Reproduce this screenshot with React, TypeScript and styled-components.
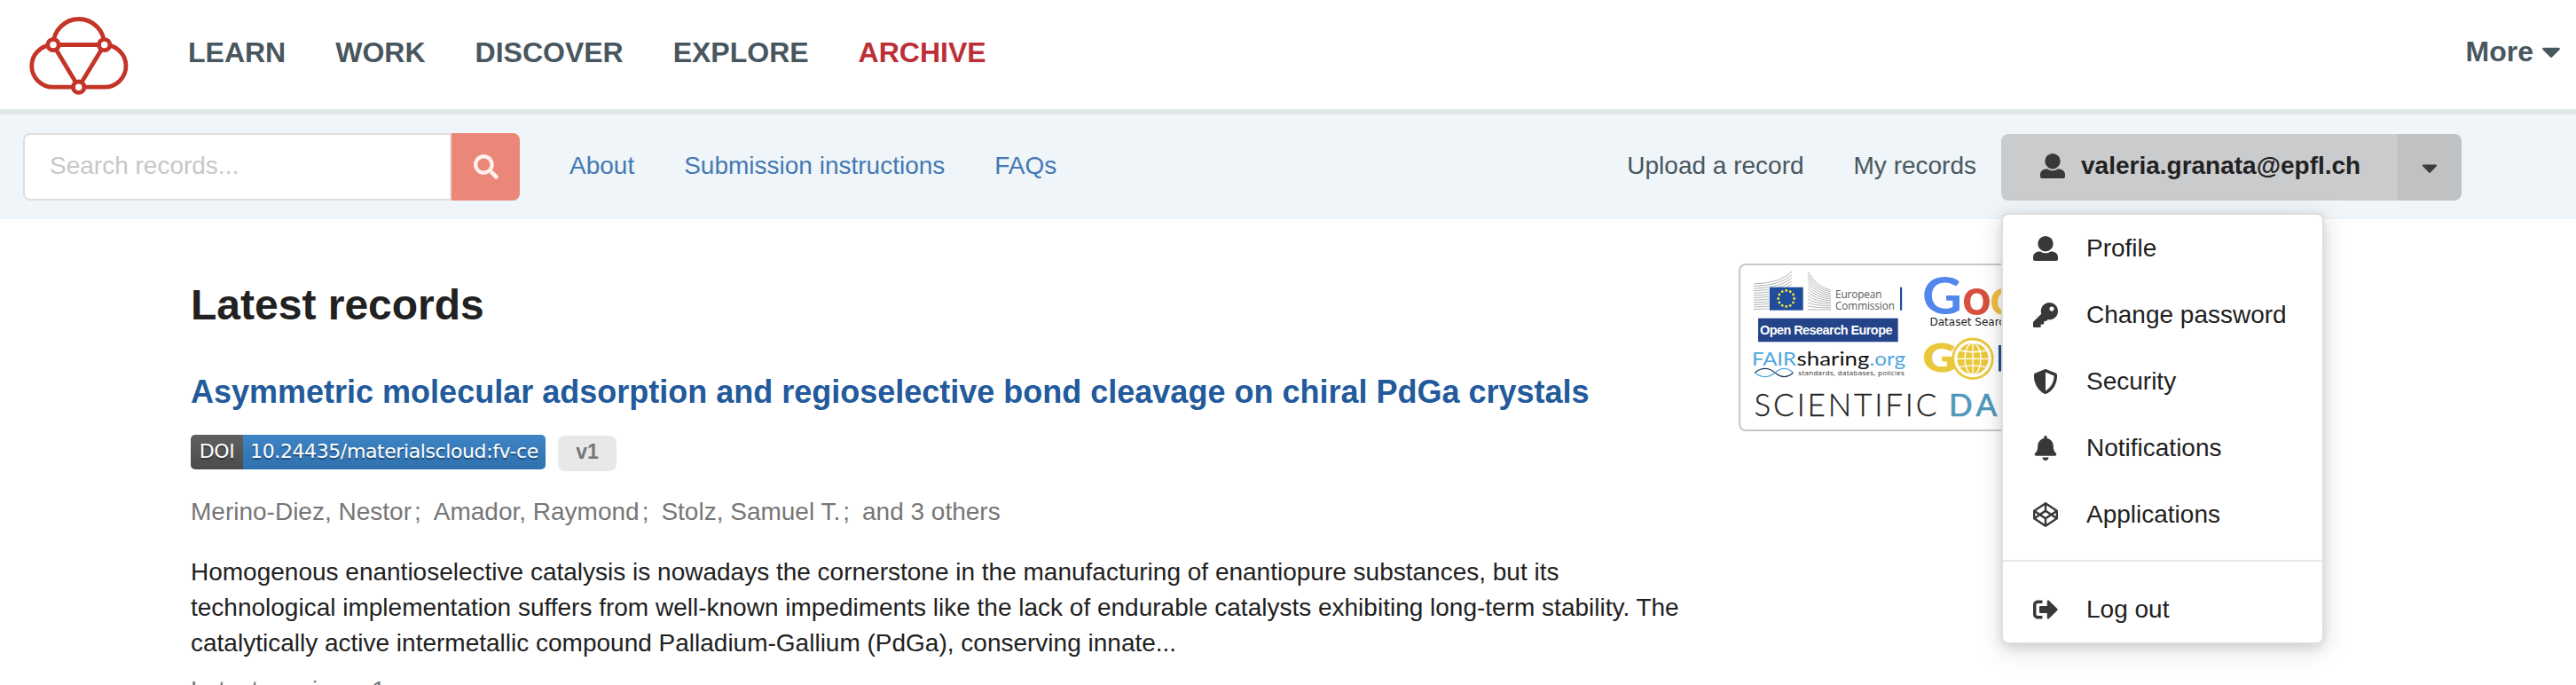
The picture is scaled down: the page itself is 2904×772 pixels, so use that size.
import React from "react";
import styled, { createGlobalStyle } from "styled-components";
import {
  FaSearch,
  FaCaretDown,
  FaKey,
  FaBell,
  FaCodepen,
  FaSignOutAlt,
  FaShieldAlt,
} from "react-icons/fa";

const GlobalStyle = createGlobalStyle`
  body {
    margin: 0;
    height: 772px;
    overflow: hidden;
    background: #fff;
    color: #212121;
    font-family: "Liberation Sans", Arial, sans-serif;
    font-size: 28px;
  }
`;

const Header = styled.header`
  box-sizing: border-box;
  height: 129px;
  padding: 0 11px 6px 32px;
  display: flex;
  align-items: center;
  border-bottom: 6px solid #dfe6e5;
`;

const LogoImage = styled.svg`
  margin-top: 9px;
`;

const Nav = styled.nav`
  display: flex;
  flex: 1;
  gap: 56px;
  margin-left: 66px;
`;

const NavLink = styled.a<{ $active?: boolean }>`
  font-size: 32px;
  font-weight: 700;
  line-height: 40px;
  color: ${(p) => (p.$active ? "#bc2f36" : "#48575e")};
`;

const More = styled(NavLink)`
  display: flex;
  align-items: center;
  gap: 3px;
  padding-bottom: 2px;
`;

const SearchBar = styled.div`
  box-sizing: border-box;
  height: 118px;
  padding: 0 129px 0 26px;
  display: flex;
  align-items: center;
  background: #eff5f8;
`;

const SearchBox = styled.form`
  display: flex;
  width: 560px;
  height: 76px;
`;

const SearchInput = styled.input`
  box-sizing: border-box;
  flex: 1;
  min-width: 0;
  padding: 0 28px 3px;
  border: 2px solid #dededf;
  border-radius: 8px 0 0 8px;
  font: inherit;
  background: #fff;
  &::placeholder {
    color: #c7c7c7;
    opacity: 1;
  }
`;

const SearchButton = styled.button`
  width: 77px;
  border: 0;
  padding: 0;
  border-radius: 0 8px 8px 0;
  background: #eb8778;
  color: #fdf0ee;
  display: flex;
  align-items: center;
  justify-content: center;
`;

const Links = styled.div`
  display: flex;
  gap: 56px;
  margin-left: 56px;
  padding-bottom: 3px;
  color: #4479b4;
`;

const UserLinks = styled(Links)`
  margin-left: auto;
  color: #48575e;
`;

const Account = styled.div`
  position: relative;
  display: flex;
  width: 519px;
  height: 75px;
  margin: 1px 0 0 28px;
  font-weight: 700;
`;

const AccountButton = styled.div`
  flex: 1;
  display: flex;
  align-items: center;
  gap: 18px;
  padding: 0 0 4px 44px;
  border-radius: 8px 0 0 8px;
  background: #cacbcd;
`;

const AccountToggle = styled.div`
  width: 72px;
  display: flex;
  align-items: center;
  justify-content: center;
  border-radius: 0 8px 8px 0;
  background: #c0c1c2;
  color: #3b3b3b;
`;

const Menu = styled.div`
  position: absolute;
  top: 89px;
  left: 0;
  z-index: 2;
  box-sizing: border-box;
  width: 364px;
  height: 486px;
  border: 2px solid #dededf;
  border-radius: 8px;
  background: #fff;
  box-shadow: 0 4px 12px rgba(34, 36, 38, 0.12), 0 6px 30px rgba(34, 36, 38, 0.15);
  font-weight: 400;
  color: #212121;
`;

const MenuItem = styled.div`
  display: flex;
  align-items: center;
  gap: 32px;
  height: 75px;
  padding-left: 34px;
  svg {
    color: #383838;
  }
`;

const Divider = styled.div`
  height: 2px;
  margin: 14px 0 16px;
  background: #e9e9e9;
`;

const Page = styled.main`
  display: flex;
  gap: 25px;
  padding-left: 215px;
`;

const Records = styled.section`
  width: 1720px;
  white-space: nowrap;
`;

const Heading = styled.h1`
  margin: 67px 0 0;
  font-size: 48px;
  line-height: 60px;
`;

const RecordTitle = styled.h2`
  margin: 45px 0 0;
  font-size: 36px;
  line-height: 46px;
  color: #225a9b;
`;

const Badges = styled.div`
  display: flex;
  gap: 14px;
  margin-top: 25px;
`;

const Doi = styled.div`
  display: flex;
  width: 400px;
  height: 39px;
  border-radius: 5px;
  overflow: hidden;
  font-family: "DejaVu Sans", sans-serif;
  font-size: 22px;
  letter-spacing: -0.4px;
  line-height: 38px;
  color: #fff;
  text-shadow: 0 2px 1px rgba(1, 1, 1, 0.35);
  text-align: center;
`;

const DoiLabel = styled.span`
  width: 59px;
  background: linear-gradient(#606060, #4b4b4b);
`;

const DoiValue = styled.span`
  flex: 1;
  background: linear-gradient(#3e84c4, #3070ae);
`;

const Version = styled.span`
  width: 66px;
  height: 40px;
  margin-top: 1px;
  border-radius: 8px;
  background: #e8e8e8;
  color: #767676;
  font-size: 23px;
  font-weight: 700;
  line-height: 36px;
  text-align: center;
`;

const Authors = styled.div`
  display: flex;
  gap: 14px;
  margin-top: 26px;
  line-height: 40px;
  color: #767676;
`;

const Author = styled.span`
  i {
    margin-left: 3px;
    font-style: normal;
  }
`;

const Abstract = styled.p`
  margin: 28px 0 0;
  line-height: 40px;
`;

const Latest = styled.p`
  margin: 13px 0 0;
  line-height: 40px;
  color: #767676;
`;

const Partners = styled.aside`
  box-sizing: border-box;
  width: 580px;
  height: 189px;
  margin-top: 50px;
  border: 2px solid #c7c7c7;
  border-radius: 8px;
  overflow: hidden;
`;

const Logo = () => (
  <LogoImage width="114" height="92" viewBox="0 0 114 92" fill="none" stroke="#c43427" strokeWidth="4.8">
    <path d="M28 33.500A28.850 29 0 0 1 85.700 33.500A24.300 23.850 0 0 1 85.700 81.200H28A24.300 23.850 0 0 1 28 33.500H85.700L56.700 81.200Z" />
    <g fill="#fff">
      <circle cx="28" cy="33.500" r="6.200" />
      <circle cx="85.700" cy="33.500" r="6.200" />
      <circle cx="56.700" cy="81.200" r="6.200" />
    </g>
  </LogoImage>
);

const UserIcon = () => (
  <svg width="28" height="28" viewBox="0 0 28 28" fill="#383838">
    <circle cx="14" cy="8.700" r="8.700" />
    <path d="M7.500 17.500C9.500 17.500 10 19.300 14 19.300S18.500 17.500 20.500 17.500C25 17.500 28 20 28 24V26Q28 28 26 28H2Q0 28 0 26V24C0 20 3 17.500 7.500 17.500Z" />
  </svg>
);

const menuItems = [
  { label: "Profile", icon: <UserIcon /> },
  { label: "Change password", icon: <FaKey size={28} /> },
  { label: "Security", icon: <FaShieldAlt size={28} /> },
  { label: "Notifications", icon: <FaBell size={28} /> },
  { label: "Applications", icon: <FaCodepen size={28} /> },
];

// the twelve stars of the EU flag
const stars = Array.from({ length: 12 }, (_, i) => {
  const angle = (i * Math.PI) / 6;
  return { x: 51.7 + 9 * Math.sin(angle), y: 37.5 - 9 * Math.cos(angle) };
});

const facade = Array.from({ length: 12 }, (_, i) => i);

const PartnerLogos = () => (
  <svg width="576" height="185" viewBox="0 0 576 185">
    <g stroke="#a9abad" strokeWidth="0.9" fill="none">
      {facade.map((i) => (
        <path key={i} d={`M15 ${21 + i * 2.6}Q46 ${20 + i * 2.6} 58 ${7 + i * 3.6}`} />
      ))}
      {facade.map((i) => (
        <path key={i} d={`M76 ${7 + i * 3.9}Q86 ${25 + i * 2.3} 102 ${28 + i * 2}`} />
      ))}
    </g>
    <rect x="33" y="24.700" width="37.700" height="26" fill="#1f4c9c" />
    {stars.map(({ x, y }, i) => (
      <circle key={i} cx={x} cy={y} r="1.400" fill="#f7e53b" />
    ))}
    <g fontFamily="Open Sans, sans-serif" fontSize="11.800" fill="#58595b">
      <text x="107" y="36.500" textLength="52.500">European</text>
      <text x="107" y="50.300" textLength="67">Commission</text>
    </g>
    <rect x="180" y="24.700" width="2.200" height="26" fill="#1f4c9c" />

    <rect x="20" y="59.700" width="157.700" height="26.600" fill="#234489" />
    <text x="22" y="78" fill="#fff" fontSize="14.500" fontWeight="700" textLength="149.500">
      Open Research Europe
    </text>

    <g fontFamily="Lato, sans-serif" fontSize="22">
      <text x="13" y="113" fill="#4fa6de" textLength="50" lengthAdjust="spacingAndGlyphs">FAIR</text>
      <text x="63.500" y="113" fill="#111" textLength="82" lengthAdjust="spacingAndGlyphs">sharing</text>
      <text x="145.500" y="113" fill="#4fa6de" textLength="40.500" lengthAdjust="spacingAndGlyphs">.org</text>
    </g>
    <g fill="none" strokeWidth="1.200">
      <path d="M16 121C24 115 32 115 39 121S53 127 59.500 121" stroke="#1d3557" />
      <path d="M16 121C24 127 32 127 39 121S53 115 59.500 121" stroke="#4fa6de" />
    </g>
    <text x="65.300" y="124.300" fontFamily="Open Sans, sans-serif" fontSize="8" fill="#333" textLength="119.500">
      standards, databases, policies
    </text>

    <g fontFamily="Lato, sans-serif" fontSize="35">
      <text x="15.500" y="169.700" fontWeight="300" fill="#222" stroke="#222" strokeWidth="0.3" textLength="206">
        SCIENTIFIC
      </text>
      <text x="235 265.500 296 318" y="169.700" fill="#5097ba" stroke="#5097ba" strokeWidth="0.7">DATA</text>
    </g>

    <g fontFamily="Lato, sans-serif" fontSize="57" fontWeight="700">
      <text x="205" y="54.500" fill="#5186ec" textLength="45" lengthAdjust="spacingAndGlyphs">G</text>
      <text x="250" y="55.500" fill="#d8503f">o</text>
      <text x="281" y="55.500" fill="#f1bf42">o</text>
    </g>
    <text x="213.500" y="68" fontFamily="DejaVu Sans, sans-serif" fontSize="12" fill="#222">
      Dataset Search
    </text>

    <text
      x="206"
      y="120"
      fontFamily="Lato, sans-serif"
      fontSize="43"
      fontWeight="900"
      fill="#e9c83c"
      stroke="#e9c83c"
      textLength="37"
      lengthAdjust="spacingAndGlyphs"
    >
      G
    </text>
    <circle cx="262" cy="105.300" r="22.300" fill="#fff" stroke="#e9c83c" strokeWidth="2.800" />
    <circle cx="262" cy="105.300" r="17.600" fill="#e9c83c" />
    <g fill="none" stroke="#fff" strokeWidth="1.300">
      <path d="M262 87V123M244 105.300H280M247 96Q262 99.500 277 96M247 114.600Q262 111 277 114.600" />
      <ellipse cx="262" cy="105.300" rx="9" ry="17.600" />
    </g>
    <rect x="291" y="90" width="7" height="29.500" fill="#1d4f8f" />
  </svg>
);

const App = () => (
  <>
    <GlobalStyle />
    <Header>
      <Logo />
      <Nav>
        <NavLink>LEARN</NavLink>
        <NavLink>WORK</NavLink>
        <NavLink>DISCOVER</NavLink>
        <NavLink>EXPLORE</NavLink>
        <NavLink $active>ARCHIVE</NavLink>
      </Nav>
      <More>
        More
        <FaCaretDown size={34} />
      </More>
    </Header>
    <SearchBar>
      <SearchBox>
        <SearchInput placeholder="Search records..." />
        <SearchButton type="button">
          <FaSearch size={28} />
        </SearchButton>
      </SearchBox>
      <Links>
        <a>About</a>
        <a>Submission instructions</a>
        <a>FAQs</a>
      </Links>
      <UserLinks>
        <a>Upload a record</a>
        <a>My records</a>
      </UserLinks>
      <Account>
        <AccountButton>
          <UserIcon />
          valeria.granata@epfl.ch
        </AccountButton>
        <AccountToggle>
          <FaCaretDown size={28} />
        </AccountToggle>
        <Menu>
          {menuItems.map(({ label, icon }) => (
            <MenuItem key={label}>
              {icon}
              {label}
            </MenuItem>
          ))}
          <Divider />
          <MenuItem>
            <FaSignOutAlt size={28} />
            Log out
          </MenuItem>
        </Menu>
      </Account>
    </SearchBar>
    <Page>
      <Records>
        <Heading>Latest records</Heading>
        <RecordTitle>
          Asymmetric molecular adsorption and regioselective bond cleavage on chiral PdGa crystals
        </RecordTitle>
        <Badges>
          <Doi>
            <DoiLabel>DOI</DoiLabel>
            <DoiValue>10.24435/materialscloud:fv-ce</DoiValue>
          </Doi>
          <Version>v1</Version>
        </Badges>
        <Authors>
          <Author>Merino-Diez, Nestor<i>;</i></Author>
          <Author>Amador, Raymond<i>;</i></Author>
          <Author>Stolz, Samuel T.<i>;</i></Author>
          <Author>and 3 others</Author>
        </Authors>
        <Abstract>
          Homogenous enantioselective catalysis is nowadays the cornerstone in the manufacturing of enantiopure substances, but its
          <br />
          technological implementation suffers from well-known impediments like the lack of endurable catalysts exhibiting long-term stability. The
          <br />
          catalytically active intermetallic compound Palladium-Gallium (PdGa), conserving innate...
        </Abstract>
        <Latest>Latest version: v1</Latest>
      </Records>
      <Partners>
        <PartnerLogos />
      </Partners>
    </Page>
  </>
);

export default App;
